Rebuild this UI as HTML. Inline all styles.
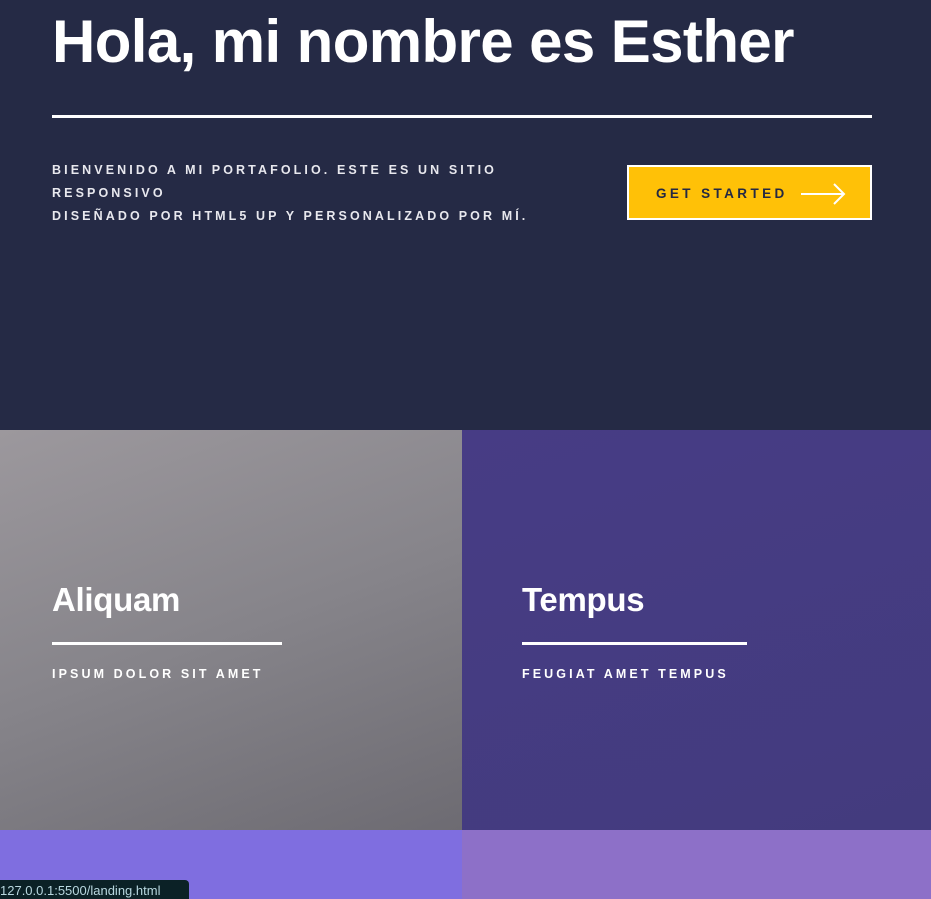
<!DOCTYPE html>
<html><head><meta charset="utf-8"><style>
*{margin:0;padding:0;box-sizing:border-box}
body{width:931px;height:899px;overflow:hidden;background:#242943;font-family:"Liberation Sans",sans-serif;color:#fff;position:relative}
.hero{position:absolute;left:0;top:0;width:931px;height:430px;background:#252a45}
h1{position:absolute;left:52px;top:6px;font-size:60px;font-weight:bold;letter-spacing:-0.6px;line-height:72px}
.rule{position:absolute;left:52px;top:115px;width:820px;height:3px;background:#fff}
.intro{position:absolute;left:52px;top:159px;font-size:12.5px;font-weight:bold;letter-spacing:3.1px;line-height:23px;color:#e8e8ee}
.btn{position:absolute;left:627px;top:165px;width:245px;height:55px;background:#ffc107;border:2px solid #fff;color:#242943;font-size:13.5px;font-weight:bold;letter-spacing:3.4px;padding-left:27px;line-height:53px}
.btn svg{position:absolute;right:24px;top:16px}
.tile{position:absolute;top:430px;height:400px;width:465px}
.t1{left:0;width:462px;background:linear-gradient(160deg,#9c989d 0%,#86848a 50%,#6d6b72 100%)}
.t2{left:462px;width:469px;background:linear-gradient(160deg,#473c85,#433b7e)}
.tile h2{position:absolute;left:52px;top:151px;font-size:33px;font-weight:bold;letter-spacing:-0.3px}
.tile .ln{position:absolute;left:52px;top:212px;height:3px;background:#fff}
.tile p{position:absolute;left:52px;top:237px;font-size:12.5px;font-weight:bold;letter-spacing:3.1px}
.b1{position:absolute;left:0;top:830px;width:462px;height:69px;background:#7f6ee0}
.b2{position:absolute;left:462px;top:830px;width:469px;height:69px;background:#8d70c8}
.st{position:absolute;left:0;top:880px;height:19px;width:189px;background:#0b2126;border-radius:0 4px 0 0;color:#b8d7df;font-size:13px;line-height:22px;overflow:hidden;white-space:nowrap}
</style></head><body>
<div class="hero">
<h1>Hola, mi nombre es Esther</h1>
<div class="rule"></div>
<div class="intro">BIENVENIDO A MI PORTAFOLIO. ESTE ES UN SITIO<br>RESPONSIVO<br>DISEÑADO POR HTML5 UP Y PERSONALIZADO POR MÍ.</div>
<div class="btn">GET STARTED<svg width="46" height="22" viewBox="0 0 46 22"><path d="M1 11H44M34 1L44 11L34 21" stroke="#fff" stroke-width="2" fill="none"/></svg></div>
</div>
<div class="tile t1"><h2>Aliquam</h2><div class="ln" style="width:230px"></div><p>IPSUM DOLOR SIT AMET</p></div>
<div class="tile t2"><h2 style="left:60px">Tempus</h2><div class="ln" style="left:60px;width:225px"></div><p style="left:60px">FEUGIAT AMET TEMPUS</p></div>
<div class="b1"></div><div class="b2"></div>
<div class="st">127.0.0.1:5500/landing.html</div>
</body></html>
